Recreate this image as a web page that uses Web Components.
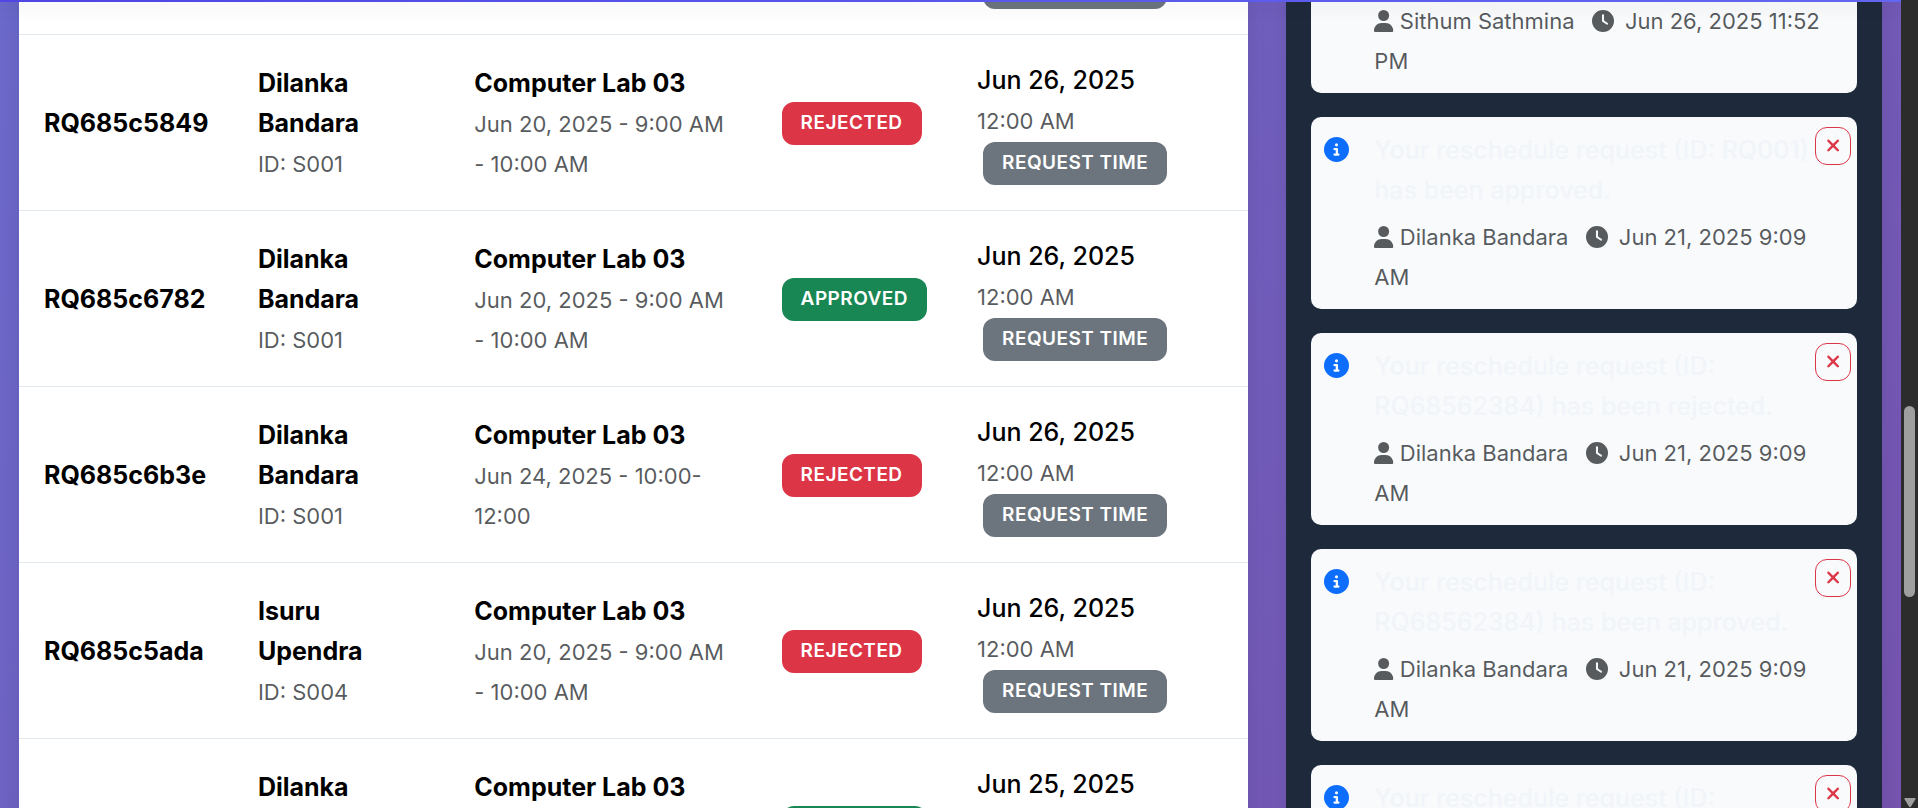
<!DOCTYPE html>
<html lang="en">
<head>
<meta charset="utf-8">
<meta name="viewport" content="width=device-width, initial-scale=1">
<title>Reschedule Requests</title>
<style>
  body {
    margin: 0;
    font: 400 25px/40px Inter, "Liberation Sans", sans-serif;
    color: #000;
  }
</style>
</head>
<body>
<dashboard-page>
  <request-table slot="requests"></request-table>
  <notification-list slot="notifications">
    <notification-card sender="Sithum Sathmina" time="Jun 26, 2025 11:52 PM">Your reschedule request (ID: RQ685c5849) has been rejected.</notification-card>
    <notification-card sender="Dilanka Bandara" time="Jun 21, 2025 9:09 AM">Your reschedule request (ID: RQ001) has been approved.</notification-card>
    <notification-card sender="Dilanka Bandara" time="Jun 21, 2025 9:09 AM">Your reschedule request (ID: RQ68562384) has been rejected.</notification-card>
    <notification-card sender="Dilanka Bandara" time="Jun 21, 2025 9:09 AM">Your reschedule request (ID: RQ68562384) has been approved.</notification-card>
    <notification-card sender="Dilanka Bandara" time="Jun 21, 2025 9:09 AM">Your reschedule request (ID: RQ68562384) has been approved.</notification-card>
  </notification-list>
</dashboard-page>

<script>
  const ICONS = {
    user: ['0 0 448 512', 'M224 256A128 128 0 1 0 224 0a128 128 0 1 0 0 256zm-45.7 48C79.8 304 0 383.8 0 482.3C0 498.7 13.3 512 29.7 512H418.3c16.4 0 29.7-13.3 29.7-29.7C448 383.8 368.2 304 269.7 304H178.3z'],
    clock: ['0 0 512 512', 'M256 0a256 256 0 1 1 0 512A256 256 0 1 1 256 0zM232 120V256c0 8 4 15.5 10.7 20l96 64c11 7.4 25.9 4.4 33.3-6.7s4.4-25.9-6.7-33.3L280 243.2V120c0-13.3-10.7-24-24-24s-24 10.7-24 24z'],
    info: ['0 0 512 512', 'M256 512A256 256 0 1 0 256 0a256 256 0 1 0 0 512zM216 336h24V272H216c-13.3 0-24-10.7-24-24s10.7-24 24-24h48c13.3 0 24 10.7 24 24v88h8c13.3 0 24 10.7 24 24s-10.7 24-24 24H216c-13.3 0-24-10.7-24-24s10.7-24 24-24zm40-208a32 32 0 1 1 0 64 32 32 0 1 1 0-64z'],
    close: ['0 0 384 512', 'M342.6 150.6c12.5-12.5 12.5-32.8 0-45.3s-32.8-12.5-45.3 0L192 210.7 86.6 105.4c-12.5-12.5-32.8-12.5-45.3 0s-12.5 32.8 0 45.3L146.7 256 41.4 361.4c-12.5 12.5-12.5 32.8 0 45.3s32.8 12.5 45.3 0L192 301.3 297.4 406.6c12.5 12.5 32.8 12.5 45.3 0s12.5-32.8 0-45.3L237.3 256 342.6 150.6z']
  };
  const icon = name => `<svg class="${name}" viewBox="${ICONS[name][0]}" aria-hidden="true"><path fill="currentColor" d="${ICONS[name][1]}"/></svg>`;

  class StatusBadge extends HTMLElement {
    constructor() {
      super();
      this.attachShadow({ mode: 'open' }).innerHTML = `
        <style>
          :host {
            display: inline-block;
            padding: 7px 19px 9px;
            border-radius: 12px;
            background: #6c757d;
            color: #fff;
            font-size: 19px;
            font-weight: 600;
            line-height: 27px;
            letter-spacing: 0.025em;
            text-transform: uppercase;
            white-space: nowrap;
          }
          :host([kind="rejected"]) { background: #dc3545; }
          :host([kind="approved"]) { background: #198754; }
        </style><slot></slot>`;
    }
  }

  class RequestTable extends HTMLElement {
    constructor() {
      super();
      const rows = [
        ['RQ685c5848', 'Dilanka Bandara', 'S001', 'Jun 20, 2025 - 9:00 AM - 10:00 AM', 'rejected', 'Jun 26, 2025'],
        ['RQ685c5849', 'Dilanka Bandara', 'S001', 'Jun 20, 2025 - 9:00 AM - 10:00 AM', 'rejected', 'Jun 26, 2025'],
        ['RQ685c6782', 'Dilanka Bandara', 'S001', 'Jun 20, 2025 - 9:00 AM - 10:00 AM', 'approved', 'Jun 26, 2025'],
        ['RQ685c6b3e', 'Dilanka Bandara', 'S001', 'Jun 24, 2025 - 10:00-12:00', 'rejected', 'Jun 26, 2025'],
        ['RQ685c5ada', 'Isuru Upendra', 'S004', 'Jun 20, 2025 - 9:00 AM - 10:00 AM', 'rejected', 'Jun 26, 2025'],
        ['RQ685c5adb', 'Dilanka Bandara', 'S001', 'Jun 20, 2025 - 9:00 AM - 10:00 AM', 'approved', 'Jun 25, 2025']
      ];
      this.attachShadow({ mode: 'open' }).innerHTML = `
        <style>
          :host { display: block; background: #fff; box-shadow: 0 12px 25px rgba(0, 0, 0, .1); }
          table { width: 100%; table-layout: fixed; border-spacing: 0; }
          .id { width: 17.4%; }
          .student { width: 17.6%; }
          .lab { width: 25%; }
          .status { width: 15.9%; }
          td { padding: 25px; border-bottom: 1px solid #e2e8f0; vertical-align: middle; text-align: left; }
          strong { display: block; font-weight: 700; }
          small { font-size: 22px; font-weight: 400; line-height: 35px; color: rgba(33, 37, 41, .75); }
          .date { font-weight: 500; }
          .date status-badge { margin-left: 6px; }
        </style>
        <table>
          <colgroup><col class="id"><col class="student"><col class="lab"><col class="status"><col></colgroup>
          <tbody>${rows.map(([id, name, sid, slot, status, date]) => `
            <tr>
              <td><strong>${id}</strong></td>
              <td><strong>${name}</strong><small>ID: ${sid}</small></td>
              <td><strong>Computer Lab 03</strong><small>${slot}</small></td>
              <td><status-badge kind="${status}">${status}</status-badge></td>
              <td class="date">${date}<br><small>12:00 AM</small> <status-badge>Request time</status-badge></td>
            </tr>`).join('')}
          </tbody>
        </table>`;
    }
  }

  class NotificationList extends HTMLElement {
    constructor() {
      super();
      this.attachShadow({ mode: 'open' }).innerHTML = `
        <style>
          :host {
            display: flex; flex-direction: column; gap: 24px;
            padding: 25px; background: #1e293b; color: #f1f5f9;
            box-shadow: 0 12px 25px rgba(0, 0, 0, .1);
          }
        </style><slot></slot>`;
    }
  }

  class NotificationCard extends HTMLElement {
    constructor() {
      super();
      this.attachShadow({ mode: 'open' }).innerHTML = `
        <style>
          :host {
            position: relative; display: flex; gap: 25px;
            padding: 13px 25px 13px 13px;
            border-radius: 10px; background: #f8fafc;
          }
          .info { flex: none; width: 25px; height: 25px; margin-top: 7px; color: #0d6efd; }
          .body { flex: 1; min-width: 0; display: grid; gap: 6px; }
          p { margin: 0; }
          .message { font-weight: 500; }
          small { font-size: 22px; line-height: 35px; color: rgba(33, 37, 41, .75); }
          .user, .clock { height: 22px; vertical-align: -3px; }
          .clock { margin: 0 5px 0 11px; }
          button {
            position: absolute; top: 10px; right: 6px;
            display: grid; place-items: center;
            width: 36px; height: 38px; padding: 0 0 2px;
            border: 1px solid #dc3545; border-radius: 12px;
            background: none; color: #dc3545;
          }
          .close { height: 19px; }
        </style>
        ${icon('info')}
        <div class="body">
          <p class="message"><slot></slot></p>
          <p><small>${icon('user')} ${this.getAttribute('sender')} ${icon('clock')} ${this.getAttribute('time')}</small></p>
        </div>
        <button type="button" aria-label="Dismiss">${icon('close')}</button>`;
    }
  }

  class DashboardPage extends HTMLElement {
    constructor() {
      super();
      this.attachShadow({ mode: 'open' }).innerHTML = `
        <style>
          :host { display: flex; height: 100vh; overflow: hidden; }
          .view {
            position: relative; flex: 1; min-width: 0; overflow: hidden;
            background: linear-gradient(135deg, #6c6acd, #7654b0);
          }
          header {
            position: relative; z-index: 1; height: 2px;
            background: linear-gradient(90deg, #4f46e5, #6366f1);
            box-shadow: 0 5px 15px rgba(0, 0, 0, .2);
          }
          /* the page is shown scrolled part of the way through both lists */
          main { display: flex; margin-top: -143px; }
          section { box-sizing: border-box; padding: 0 19px; }
          .requests { width: 66.667%; }
          .notifications { width: 33.333%; }
          ::slotted(notification-list) { padding-top: 42px; }
          .scrollbar {
            flex: none; width: 17px; box-sizing: border-box;
            display: flex; flex-direction: column; align-items: center;
            background: #2c2c2c;
          }
          .track { flex: 1; width: 11px; display: grid; grid-template-rows: 406fr 191fr 201fr; }
          .thumb { grid-row: 2; border-radius: 6px; background: #9f9f9f; }
          .arrow { width: 12px; height: 10px; }
        </style>
        <div class="view">
          <header></header>
          <main>
            <section class="requests"><slot name="requests"></slot></section>
            <section class="notifications"><slot name="notifications"></slot></section>
          </main>
        </div>
        <div class="scrollbar" aria-hidden="true">
          <div class="track"><div class="thumb"></div></div>
          <svg class="arrow" viewBox="0 0 12 10"><path d="M1 0h10q1 0 .6 1L7 8.500q-1 1.500-2 0L.4 1Q0 0 1 0z" fill="#9f9f9f"/></svg>
        </div>`;
    }
  }

  customElements.define('status-badge', StatusBadge);
  customElements.define('request-table', RequestTable);
  customElements.define('notification-list', NotificationList);
  customElements.define('notification-card', NotificationCard);
  customElements.define('dashboard-page', DashboardPage);
</script>
</body>
</html>
